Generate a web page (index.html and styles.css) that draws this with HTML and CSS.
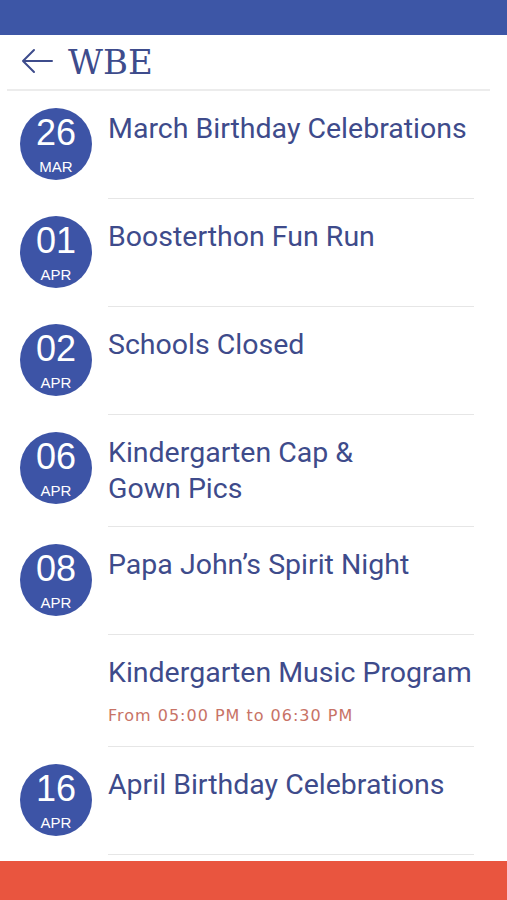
FILE: index.html
```html
<!DOCTYPE html>
<html>
<head>
<meta charset="utf-8">
<link rel="stylesheet" href="styles.css">
</head>
<body>
<div class="statusbar"></div>
<header class="header">
  <svg class="back" width="34" height="26" viewBox="0 0 34 26"><path d="M32 13H3M14 2L3 13l11 11" fill="none" stroke="#3e4c8c" stroke-width="2" stroke-linecap="round" stroke-linejoin="round"/></svg>
  <h1 class="title">WBE</h1>
</header>
<main class="list">
  <div class="row">
    <div class="date"><span class="day">26</span><span class="mon">MAR</span></div>
    <div class="info"><div class="name">March Birthday Celebrations</div></div>
  </div>
  <div class="row">
    <div class="date"><span class="day">01</span><span class="mon">APR</span></div>
    <div class="info"><div class="name">Boosterthon Fun Run</div></div>
  </div>
  <div class="row">
    <div class="date"><span class="day">02</span><span class="mon">APR</span></div>
    <div class="info"><div class="name">Schools Closed</div></div>
  </div>
  <div class="row">
    <div class="date"><span class="day">06</span><span class="mon">APR</span></div>
    <div class="info"><div class="name">Kindergarten Cap &amp;<br>Gown Pics</div></div>
  </div>
  <div class="row">
    <div class="date"><span class="day">08</span><span class="mon">APR</span></div>
    <div class="info"><div class="name">Papa John’s Spirit Night</div></div>
  </div>
  <div class="row">
    <div class="nodate"></div>
    <div class="info"><div class="name">Kindergarten Music Program</div><div class="time">From 05:00 PM to 06:30 PM</div></div>
  </div>
  <div class="row">
    <div class="date"><span class="day">16</span><span class="mon">APR</span></div>
    <div class="info"><div class="name">April Birthday Celebrations</div></div>
  </div>
</main>
<footer class="footer"></footer>
</body>
</html>
```
FILE: styles.css
```css
* { box-sizing: border-box; }
html, body { margin: 0; padding: 0; }
body {
  width: 507px;
  height: 900px;
  background: #ffffff;
  font-family: Roboto, "Noto Sans", sans-serif;
  position: relative;
  overflow: hidden;
}
.statusbar {
  height: 35px;
  background: #3d56a6;
}
.header {
  height: 56px;
  margin: 0 17px 0 7px;
  display: flex;
  align-items: center;
  gap: 14px;
  padding-left: 13px;
  border-bottom: 2px solid #ececec;
}
.back { display: block; margin-top: -2px; }
.title {
  margin: 0 0 1px;
  font-family: "DejaVu Serif", "Liberation Serif", serif;
  font-weight: normal;
  font-size: 34px;
  color: #3e4c8c;
}
.list {
  padding-left: 20px;
}
.row {
  display: grid;
  grid-template-columns: 72px 366px;
  column-gap: 16px;
}
.date {
  margin-top: 17px;
  width: 72px;
  height: 72px;
  border-radius: 50%;
  background: #3d54a6;
  color: #ffffff;
  display: flex;
  flex-direction: column;
  align-items: center;
  font-family: "Liberation Sans", Arial, sans-serif;
}
.day {
  font-size: 36px;
  line-height: 36px;
  margin-top: 7px;
}
.mon {
  font-size: 15px;
  line-height: 15px;
  margin-top: 8px;
}
.info {
  min-height: 108px;
  padding: 20px 0 19px;
  border-bottom: 1px solid #e6e6e6;
}
.name {
  font-size: 28.5px;
  line-height: 36px;
  color: #3e4b8b;
}
.time {
  font-family: "DejaVu Sans", "Noto Sans", sans-serif;
  font-size: 16px;
  line-height: 20px;
  margin-top: 15px;
  margin-bottom: 1px;
  color: #c87366;
  letter-spacing: 1px;
}
.footer {
  position: absolute;
  left: 0;
  right: 0;
  bottom: 0;
  height: 39px;
  background: #e9553f;
}
```
